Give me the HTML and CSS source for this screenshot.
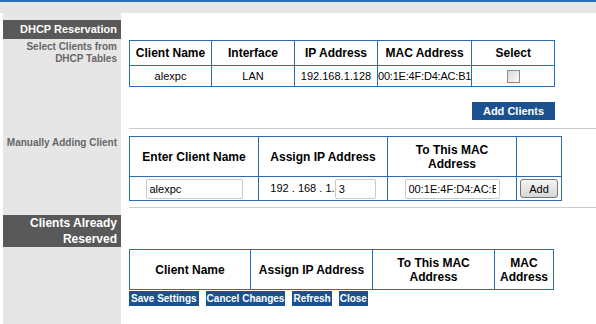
FILE: index.html
```html
<!DOCTYPE html>
<html lang="en">
<head>
  <meta charset="UTF-8">
  <title>DHCP Reservation</title>
  <link rel="stylesheet" href="styles.css">
</head>
<body>
  <div class="topbar"></div>
  <div class="strip"></div>

  <div class="layout">
    <!-- DHCP table -->
    <div class="side">
      <h2 class="side-title">DHCP Reservation</h2>
      <p class="side-label side-label-first">Select Clients from<br>DHCP Tables</p>
    </div>
    <div class="main">
      <div class="section section-dhcp">
        <table class="grid grid-dhcp">
          <colgroup>
            <col style="width:82px"><col style="width:83px"><col style="width:83px"><col style="width:94px"><col style="width:83px">
          </colgroup>
          <tr class="head-row">
            <th>Client Name</th>
            <th>Interface</th>
            <th>IP Address</th>
            <th>MAC Address</th>
            <th>Select</th>
          </tr>
          <tr class="data-row">
            <td>alexpc</td>
            <td>LAN</td>
            <td>192.168.1.128</td>
            <td class="mac-cell">00:1E:4F:D4:AC:B1</td>
            <td><input type="checkbox" class="check"></td>
          </tr>
        </table>
        <div class="actions">
          <button class="btn btn-add-clients">Add Clients</button>
        </div>
      </div>
    </div>

    <!-- manual add -->
    <div class="side">
      <p class="side-label side-label-manual">Manually Adding Client</p>
    </div>
    <div class="main">
      <div class="section section-manual">
        <table class="grid grid-manual">
          <colgroup>
            <col style="width:129px"><col style="width:129px"><col style="width:129px"><col style="width:45px">
          </colgroup>
          <tr class="head-row tall">
            <th>Enter Client Name</th>
            <th>Assign IP Address</th>
            <th>To This MAC<br>Address</th>
            <th></th>
          </tr>
          <tr class="input-row">
            <td><input type="text" class="field field-name" value="alexpc"></td>
            <td class="ip-cell">192 . 168 . 1. <input type="text" class="field field-ip" value="3"></td>
            <td><input type="text" class="field field-mac" value="00:1E:4F:D4:AC:B1"></td>
            <td><button class="btn-add">Add</button></td>
          </tr>
        </table>
      </div>
    </div>

    <!-- reserved list -->
    <div class="side">
      <h2 class="side-title side-title-reserved">Clients Already<br>Reserved</h2>
    </div>
    <div class="main">
      <div class="section section-reserved">
        <table class="grid grid-reserved">
          <colgroup>
            <col style="width:121px"><col style="width:122px"><col style="width:122px"><col style="width:59px">
          </colgroup>
          <tr class="head-row tall">
            <th>Client Name</th>
            <th>Assign IP Address</th>
            <th>To This MAC<br>Address</th>
            <th>MAC<br>Address</th>
          </tr>
        </table>
        <div class="toolbar">
          <button class="btn btn-small btn-first">Save Settings</button>
          <button class="btn btn-small">Cancel Changes</button>
          <button class="btn btn-small">Refresh</button>
          <button class="btn btn-small">Close</button>
        </div>
      </div>
    </div>
  </div>
</body>
</html>
```

FILE: styles.css
```css
body {
  margin: 0;
  font-family: "Liberation Sans", Arial, sans-serif;
  background-color: #fff;
  color: #000;
}

.topbar {
  height: 2px;
  background-color: #2b6db5;
}
.strip {
  height: 11px;
  background-color: #e6e6e6;
}

.layout {
  display: grid;
  grid-template-columns: 118px 1fr;
  grid-template-rows: auto auto 1fr;
  margin-left: 3px;
  min-height: 311px;
}

/* left column */
.side {
  background-color: #e6e6e6;
  text-align: right;
}
.side-title {
  margin: 7px 0 0;
  padding-right: 4px;
  background-color: #595959;
  color: #fff;
  font-size: 11px;
  font-weight: bold;
  line-height: 19px;
}
.side-title-reserved {
  font-size: 12px;
  line-height: 16px;
}
.side-label {
  margin: 0;
  padding-right: 4px;
  color: #666;
  font-size: 10px;
  font-weight: bold;
  line-height: 12px;
}
.side-label-first {
  margin-top: 2px;
}
.side-label-manual {
  margin-top: 8px;
}

/* right column */
.main {
  padding-left: 8px;
}
.section {
  border-bottom: 1px solid #ccc;
}
.section-dhcp {
  padding: 27px 0 8px;
}
.section-manual {
  padding: 7px 0 6px;
}
.section-reserved {
  padding-top: 41px;
  border-bottom: 0;
}

.grid {
  border-collapse: collapse;
  table-layout: fixed;
}
.grid th,
.grid td {
  border: 1px solid #2b6db5;
  padding: 0;
  text-align: center;
  vertical-align: middle;
}
.grid th {
  font-size: 12px;
  font-weight: bold;
  line-height: 14px;
}
.grid td {
  font-size: 11px;
  white-space: nowrap;
  overflow: hidden;
}
.grid-dhcp .head-row th {
  height: 24px;
}
.grid-dhcp .data-row td {
  height: 20px;
}
.mac-cell {
  text-align: left !important;
  letter-spacing: -0.2px;
}
.head-row.tall th {
  height: 39px;
}
.input-row td {
  height: 23px;
}

.check {
  -webkit-appearance: none;
  appearance: none;
  width: 13px;
  height: 13px;
  margin: 0;
  vertical-align: middle;
  border: 1px solid #8a8a8a;
  background-image: linear-gradient(to bottom right, #d8d8d8, #fbfbfb);
}

.field {
  box-sizing: border-box;
  height: 20px;
  padding: 0 3px;
  border: 1px solid #c9c9c9;
  border-radius: 2px;
  font-family: inherit;
  font-size: 11px;
  vertical-align: middle;
}
.field-name {
  width: 97px;
}
.field-ip {
  width: 41px;
  margin-left: -3px;
}
.field-mac {
  width: 95px;
}
.btn-add {
  width: 38px;
  height: 19px;
  padding: 0;
  border: 1px solid #777;
  border-radius: 3px;
  background-image: linear-gradient(to bottom, #f6f6f6, #d6d6d6);
  font-family: inherit;
  font-size: 11px;
  color: #000;
  vertical-align: middle;
}

/* blue buttons */
.btn {
  border: 0;
  margin: 0;
  padding: 0 1px;
  background-color: #1b5190;
  color: #fff;
  font-family: inherit;
  font-weight: bold;
  cursor: pointer;
}
.actions {
  display: flex;
  justify-content: flex-end;
  width: 426px;
  margin-top: 15px;
}
.btn-add-clients {
  width: 83px;
  height: 18px;
  font-size: 11px;
}
.toolbar {
  display: flex;
  gap: 7px;
  margin-top: 1px;
}
.btn-small {
  height: 15px;
  font-size: 10px;
  line-height: 15px;
}
.btn-first {
  padding: 0 2px;
}
```
